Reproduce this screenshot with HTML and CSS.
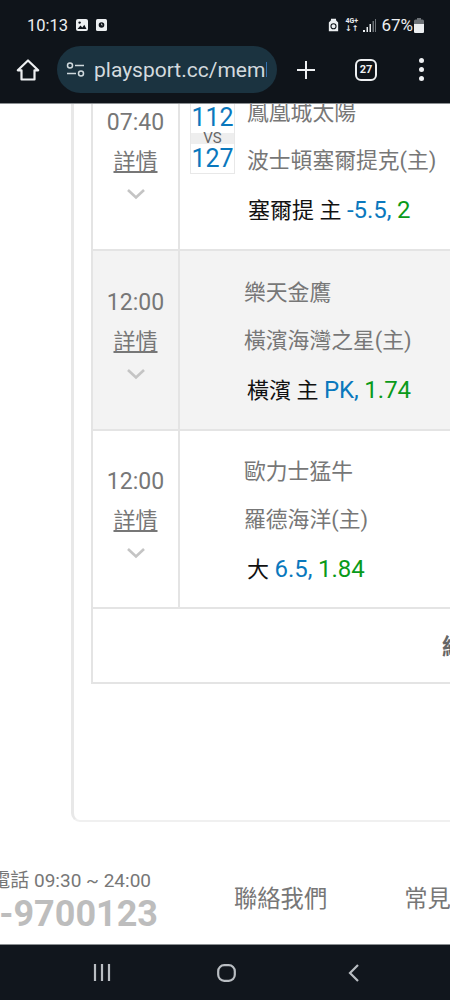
FILE: index.html
```html
<!DOCTYPE html>
<html lang="zh-Hant">
<head>
<meta charset="UTF-8">
<meta name="viewport" content="width=device-width, initial-scale=1.0">
<title>playsport.cc</title>
<link rel="stylesheet" href="styles.css">
</head>
<body>
<div class="phone">
    <header class="browser-top">
        <div class="status-bar">
            <div class="status-left">
                <span class="clock">10:13</span>
                <svg class="status-icon" width="12" height="12" viewBox="0 0 12 12"><rect width="12" height="12" rx="2" fill="#eceff1"/><circle cx="3.6" cy="3.6" r="1.2" fill="#0f141a"/><path d="M1.5 10l3-3.4 1.8 1.8 2-2.6 2.2 4.2z" fill="#0f141a"/></svg>
                <svg class="status-icon" width="11" height="12" viewBox="0 0 11 12"><rect width="11" height="12" rx="1.5" fill="#eceff1"/><circle cx="5.5" cy="6" r="2.8" fill="#0f141a"/><path d="M5.5 4.5V6h1.3" stroke="#eceff1" stroke-width=".7" fill="none"/></svg>
            </div>
            <div class="status-right">
                <svg width="11" height="14" viewBox="0 0 13 15"><path d="M3.5 0h6v2l2.500 2.500V15H1V4.500L3.500 2z" fill="#eceff1"/><circle cx="6.500" cy="9" r="3" fill="none" stroke="#0f141a" stroke-width="1.300"/></svg>
                <span class="net"><span>4G+</span><span class="net-arrows">↓↑</span></span>
                <svg width="13" height="13" viewBox="0 0 13 13"><path d="M0 11h2v2H0zM3.500 8h1.500v5H3.500zM6.500 5H8v8H6.500z" fill="#eceff1"/><path d="M9.500 2H11v11H9.500zM12 0h1v13h-1z" fill="#6d7277"/></svg>
                <span class="battery-text">67%</span>
                <svg width="10" height="15" viewBox="0 0 10 15"><path d="M3 0h4v1.500h1.500A1.500 1.500 0 0 1 10 3v10.500a1.500 1.500 0 0 1-1.500 1.500h-7A1.500 1.500 0 0 1 0 13.500V3a1.500 1.500 0 0 1 1.500-1.500H3z" fill="#6d7277"/><path d="M0 6h10v7.500a1.500 1.500 0 0 1-1.500 1.500h-7A1.500 1.500 0 0 1 0 13.500z" fill="#eceff1"/></svg>
            </div>
        </div>
        <div class="toolbar">
            <svg class="home-icon" width="24" height="24" viewBox="0 0 24 24"><path d="M12 2.500L1.800 12.300h3.700v9.200h13v-9.200h3.700z" fill="none" stroke="#eef0f2" stroke-width="2.200" stroke-linejoin="round"/></svg>
            <div class="url-pill">
                <svg width="20" height="16" viewBox="0 0 20 16"><circle cx="4" cy="3.500" r="2.500" fill="none" stroke="#cfd8dc" stroke-width="1.500"/><path d="M9 3.500h9M1 11.500h9" stroke="#cfd8dc" stroke-width="1.500"/><circle cx="15" cy="11.500" r="2.500" fill="none" stroke="#cfd8dc" stroke-width="1.500"/></svg>
                <span class="url-text">playsport.cc/member</span>
            </div>
            <svg class="plus-icon" width="20" height="20" viewBox="0 0 20 20"><path d="M10 1v18M1 10h18" stroke="#eef0f2" stroke-width="2"/></svg>
            <span class="tab-count">27</span>
            <span class="menu-dots"><i></i><i></i><i></i></span>
        </div>
    </header>

    <main class="viewport">
        <div class="card">
            <div class="game-table">
                <div class="game-row">
                    <div class="time-cell">
                        <span class="time">07:40</span>
                        <a class="detail">詳情</a>
                        <svg class="chevron" width="20" height="12" viewBox="0 0 20 12"><path d="M2 2l8 7.500L18 2" fill="none" stroke="#c4c4c4" stroke-width="2.600"/></svg>
                    </div>
                    <div class="info-cell info-scored">
                        <div class="score-box">
                            <span class="score">112</span>
                            <span class="vs">VS</span>
                            <span class="score">127</span>
                        </div>
                        <div class="teams">
                            <div class="team">鳳凰城太陽</div>
                            <div class="team">波士頓塞爾提克(主)</div>
                            <div class="pick">塞爾提 主 <span class="line">-5.5,</span> <span class="odds">2</span></div>
                        </div>
                    </div>
                </div>
                <div class="game-row row-alt">
                    <div class="time-cell">
                        <span class="time">12:00</span>
                        <a class="detail">詳情</a>
                        <svg class="chevron" width="20" height="12" viewBox="0 0 20 12"><path d="M2 2l8 7.500L18 2" fill="none" stroke="#c4c4c4" stroke-width="2.600"/></svg>
                    </div>
                    <div class="info-cell">
                        <div class="teams">
                            <div class="team">樂天金鷹</div>
                            <div class="team">橫濱海灣之星(主)</div>
                            <div class="pick">橫濱 主 <span class="line">PK,</span> <span class="odds">1.74</span></div>
                        </div>
                    </div>
                </div>
                <div class="game-row row-last">
                    <div class="time-cell">
                        <span class="time">12:00</span>
                        <a class="detail">詳情</a>
                        <svg class="chevron" width="20" height="12" viewBox="0 0 20 12"><path d="M2 2l8 7.500L18 2" fill="none" stroke="#c4c4c4" stroke-width="2.600"/></svg>
                    </div>
                    <div class="info-cell">
                        <div class="teams">
                            <div class="team">歐力士猛牛</div>
                            <div class="team">羅德海洋(主)</div>
                            <div class="pick">大 <span class="line">6.5,</span> <span class="odds">1.84</span></div>
                        </div>
                    </div>
                </div>
                <div class="summary-row">結算</div>
            </div>
        </div>

        <footer class="site-footer">
            <div class="service">
                <div class="service-hours">客服電話 09:30 ~ 24:00</div>
                <div class="service-phone">0800-9700123</div>
            </div>
            <a class="footer-link">聯絡我們</a>
            <a class="footer-link">常見問題</a>
        </footer>
    </main>

    <nav class="nav-bar">
        <svg width="18" height="17" viewBox="0 0 18 17"><path d="M2 0v17M9 0v17M16 0v17" stroke="#b9bdc2" stroke-width="2.200"/></svg>
        <svg class="nav-home" width="19" height="18" viewBox="0 0 19 18"><rect x="1.200" y="1.200" width="16.600" height="15.600" rx="6" fill="none" stroke="#b9bdc2" stroke-width="2.200"/></svg>
        <svg width="11" height="18" viewBox="0 0 11 18"><path d="M10 1L2 9l8 8" fill="none" stroke="#b9bdc2" stroke-width="2.200"/></svg>
    </nav>
</div>
</body>
</html>
```

FILE: styles.css
```css
* {
    box-sizing: border-box;
}
html, body {
    margin: 0;
    padding: 0;
    background: #fff;
}
body {
    font-family: Roboto, "Noto Sans CJK TC", sans-serif;
}
.phone {
    width: 450px;
    height: 1000px;
    display: flex;
    flex-direction: column;
    overflow: hidden;
}

/* browser chrome */
.browser-top {
    height: 104px;
    flex: none;
    background-color: #0f141a;
    border-bottom: 1px solid #8b8f92;
}
.status-bar {
    height: 46px;
    display: flex;
    justify-content: space-between;
    align-items: center;
    padding: 4px 26px 0 27px;
    color: #eceff1;
}
.status-left, .status-right {
    display: flex;
    align-items: center;
}
.status-left {
    gap: 8px;
}
.status-right {
    gap: 5px;
}
.clock {
    font-size: 16.500px;
}
.net {
    display: flex;
    flex-direction: column;
    align-items: center;
    font-size: 7px;
    font-weight: 700;
    line-height: 7px;
    margin-left: 1px;
}
.net-arrows {
    font-family: "DejaVu Sans", sans-serif;
    font-size: 8px;
}
.battery-text {
    font-size: 17px;
    margin-right: -4px;
}
.toolbar {
    height: 47px;
    display: flex;
    align-items: center;
    padding-left: 16px;
}
.home-icon {
    flex: none;
}
.url-pill {
    width: 220px;
    height: 47px;
    margin-left: 17px;
    flex: none;
    display: flex;
    align-items: center;
    gap: 8px;
    padding: 0 10px 0 9px;
    border-radius: 24px;
    background-color: #1b3340;
    overflow: hidden;
    white-space: nowrap;
}
.url-pill svg {
    flex: none;
}
.url-text {
    font-size: 21px;
    color: #d3dade;
    overflow: hidden;
}
.plus-icon {
    flex: none;
    margin-left: 19px;
}
.tab-count {
    width: 22px;
    height: 22px;
    margin-left: 39px;
    flex: none;
    display: flex;
    align-items: center;
    justify-content: center;
    border: 2px solid #eef0f2;
    border-radius: 6px;
    color: #eef0f2;
    font-size: 11px;
    font-weight: 700;
}
.menu-dots {
    margin-left: 42px;
    display: flex;
    flex-direction: column;
    gap: 4px;
}
.menu-dots i {
    width: 5px;
    height: 5px;
    border-radius: 50%;
    background-color: #eef0f2;
}

/* page, scrolled down */
.viewport {
    flex: 1;
    overflow: hidden;
    background: #fff;
}
.card {
    width: 700px;
    height: 751px;
    margin: -33px 0 0 71px;
    padding-left: 20px;
    border-left: 3px solid #e8e8e8;
    border-bottom: 2px solid #f0f0f0;
    border-bottom-left-radius: 9px;
}
.game-table {
    width: 660px;
    margin-left: -3px;
    border: 2px solid #e4e4e4;
    border-top: none;
    color: #777;
}
.game-row {
    height: 180px;
    display: flex;
    border-bottom: 2px solid #e4e4e4;
}
.row-alt {
    background-color: #f3f3f3;
}
.row-last {
    height: 178px;
}
.time-cell {
    width: 87px;
    flex: none;
    display: flex;
    flex-direction: column;
    align-items: center;
    padding-top: 36px;
    border-right: 2px solid #e4e4e4;
}
.row-last .time-cell {
    padding-top: 35px;
}
.time {
    font-size: 23px;
    line-height: 32px;
}
.detail {
    font-size: 22px;
    line-height: 32px;
    margin-top: 7px;
    color: #777;
    text-decoration: underline;
    text-underline-offset: 2px;
}
.chevron {
    margin-top: 10px;
}
.info-cell {
    flex: 1;
    display: flex;
    padding: 26px 0 0 64px;
}
.row-last .info-cell {
    padding-top: 25px;
}
.info-scored {
    padding-left: 10px;
}
.score-box {
    width: 45px;
    height: 71px;
    margin: 6px 12px 0 0;
    flex: none;
    display: flex;
    flex-direction: column;
    align-items: center;
    border: 1px solid #e8e8e8;
    border-top: none;
}
.score {
    height: 30px;
    font-size: 25px;
    line-height: 30px;
    color: #0a78bd;
}
.vs {
    width: 100%;
    height: 11px;
    background-color: #eee;
    font-size: 15px;
    line-height: 11px;
    text-align: center;
    color: #666;
}
.team {
    height: 48px;
    font-size: 21.800px;
    line-height: 32px;
    white-space: nowrap;
}
.pick {
    margin: 1px 0 0 3px;
    font-size: 22px;
    line-height: 32px;
    color: #111;
    white-space: nowrap;
}
.info-scored .pick {
    margin-left: 1px;
}
.line, .odds {
    font-size: 24px;
}
.line {
    color: #0a78bd;
}
.odds {
    color: #0a9a1a;
}
.summary-row {
    height: 73px;
    padding-left: 349px;
    font-size: 22px;
    font-weight: 700;
    line-height: 76px;
    color: #666;
}

/* footer */
.site-footer {
    height: 110px;
    margin-top: 20px;
    display: flex;
    align-items: center;
    white-space: nowrap;
    color: #777;
}
.service {
    width: 158px;
    flex: none;
    display: flex;
    flex-direction: column;
    align-items: flex-end;
    margin-top: 8px;
}
.service-hours {
    margin-right: 7px;
    font-size: 19px;
    line-height: 26px;
}
.service-phone {
    font-size: 36px;
    font-weight: 700;
    line-height: 40px;
    color: #bdbdbd;
}
.footer-link {
    margin-left: 76px;
    flex: none;
    font-size: 23.300px;
}
.footer-link + .footer-link {
    margin-left: 77px;
}

.nav-bar {
    height: 56px;
    flex: none;
    display: flex;
    align-items: center;
    padding: 0 91px 0 93px;
    justify-content: space-between;
    background-color: #11161d;
    border-top: 1px solid #8b8f92;
}
.nav-home {
    margin: 0 3px 0 -3px;
}
```
